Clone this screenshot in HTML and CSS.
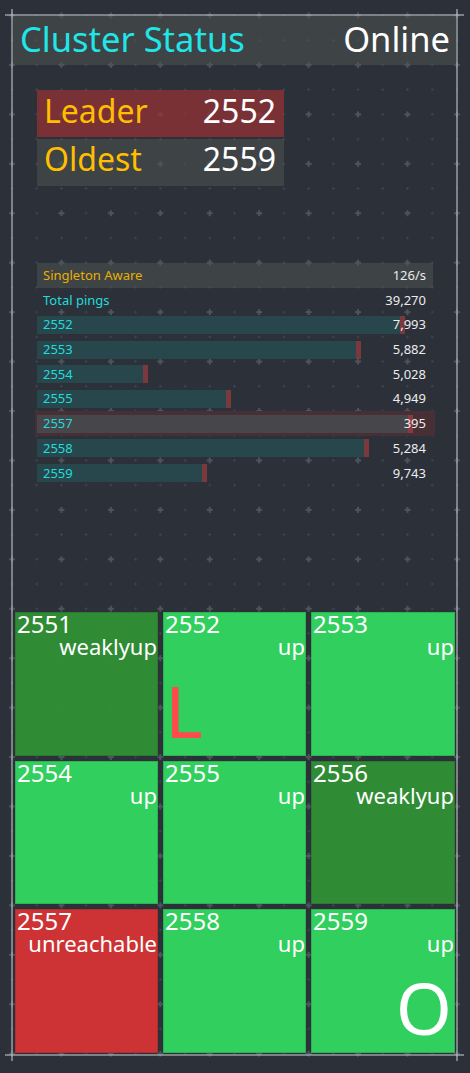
FILE: index.html
```html
<!DOCTYPE html>
<html>
<head>
<meta charset="utf-8">
<link rel="stylesheet" href="styles.css">
</head>
<body>
<div class="frame">
  <div class="header">
    <span class="title">Cluster Status</span>
    <span class="status">Online</span>
  </div>

  <div class="roles">
    <div class="role leader"><span class="role-name">Leader</span><span class="role-val">2552</span></div>
    <div class="role oldest"><span class="role-name">Oldest</span><span class="role-val">2559</span></div>
  </div>

  <div class="stats">
    <div class="row head"><span class="label gold">Singleton Aware</span><span class="val">126/s</span></div>
    <div class="row"><span class="label">Total pings</span><span class="val">39,270</span></div>
    <div class="row"><div class="bar" style="width:368px"></div><span class="label">2552</span><span class="val">7,993</span></div>
    <div class="row"><div class="bar" style="width:324px"></div><span class="label">2553</span><span class="val">5,882</span></div>
    <div class="row"><div class="bar" style="width:111px"></div><span class="label">2554</span><span class="val">5,028</span></div>
    <div class="row"><div class="bar" style="width:194px"></div><span class="label">2555</span><span class="val">4,949</span></div>
    <div class="row sel"><div class="bar gray" style="width:376px"></div><span class="label">2557</span><span class="val">395</span></div>
    <div class="row"><div class="bar" style="width:332px"></div><span class="label">2558</span><span class="val">5,284</span></div>
    <div class="row"><div class="bar" style="width:170px"></div><span class="label">2559</span><span class="val">9,743</span></div>
  </div>

  <div class="nodes">
    <div class="node weak"><span class="num">2551</span><span class="state">weaklyup</span></div>
    <div class="node up"><span class="num">2552</span><span class="state">up</span><span class="mark left">L</span></div>
    <div class="node up"><span class="num">2553</span><span class="state">up</span></div>
    <div class="node up"><span class="num">2554</span><span class="state">up</span></div>
    <div class="node up"><span class="num">2555</span><span class="state">up</span></div>
    <div class="node weak"><span class="num">2556</span><span class="state">weaklyup</span></div>
    <div class="node down"><span class="num">2557</span><span class="state">unreachable</span></div>
    <div class="node up"><span class="num">2558</span><span class="state">up</span></div>
    <div class="node up"><span class="num">2559</span><span class="state">up</span><span class="mark right">O</span></div>
  </div>
</div>
</body>
</html>
```

FILE: styles.css
```css
html, body {
  margin: 0;
  padding: 0;
}

body {
  width: 470px;
  height: 1073px;
  overflow: hidden;
  font-family: "Noto Sans", "Open Sans", "DejaVu Sans", sans-serif;
  color: #ffffff;
  background-color: #2b3039;
  background-image:
    radial-gradient(3.5px 0.8px at 50% 50%, #4e545c 95%, transparent 100%),
    radial-gradient(0.8px 3.5px at 50% 50%, #4e545c 95%, transparent 100%),
    radial-gradient(circle at 50% 50%, #3d444d 0 1px, transparent 1.3px);
  background-size: 49.44px 49.44px, 49.44px 49.44px, 24.72px 24.72px;
  background-position: -12.72px -9.22px, -12.72px -9.22px, -0.36px 3.14px;
  padding: 14px 0 0 11px;
  box-sizing: border-box;
}

.frame {
  position: relative;
  width: 447px;
  height: 1042px;
  padding: 2px;
  box-sizing: border-box;
}

.frame::before {
  content: "";
  position: absolute;
  top: 0;
  bottom: 0;
  left: -6px;
  right: -6px;
  border-top: 2px solid rgba(180, 184, 190, 0.6);
  border-bottom: 2px solid rgba(180, 184, 190, 0.6);
  pointer-events: none;
}

.frame::after {
  content: "";
  position: absolute;
  top: -5px;
  bottom: -5px;
  left: 0;
  right: 0;
  border-left: 2px solid rgba(180, 184, 190, 0.6);
  border-right: 2px solid rgba(180, 184, 190, 0.6);
  pointer-events: none;
}

.header {
  height: 49px;
  display: flex;
  justify-content: space-between;
  align-items: flex-start;
  padding: 0 6px 0 7px;
  background: rgba(78, 84, 82, 0.55);
  font-size: 34.5px;
  line-height: 45px;
}

.title {
  color: #20e6e8;
}

.status {
  color: #ffffff;
}

.roles {
  margin: 25px 0 0 24px;
  width: 247px;
  display: flex;
  flex-direction: column;
  gap: 2px;
}

.role {
  height: 47px;
  display: flex;
  justify-content: space-between;
  align-items: flex-start;
  padding: 0 8px 0 7px;
  font-size: 32px;
  line-height: 42px;
}

.leader {
  background: rgba(150, 50, 52, 0.75);
}

.oldest {
  background: rgba(78, 84, 82, 0.55);
  line-height: 40px;
}

.role-name {
  color: #ffbf00;
}

.role-val {
  color: #ffffff;
}

.stats {
  margin: 77px 0 0 24px;
  width: 396px;
  display: flex;
  flex-direction: column;
  font-size: 13px;
}

.row {
  height: 24.72px;
  display: grid;
  grid-template-columns: 1fr auto;
  align-items: center;
  line-height: 23px;
}

.row .label {
  grid-area: 1 / 1 / 2 / 2;
  padding-left: 6px;
  color: #22dcdc;
}

.row .val {
  grid-area: 1 / 2 / 2 / 3;
  padding-right: 7px;
  color: #ececec;
}

.row .label.gold {
  color: #e8b000;
}

.row.head {
  background: rgba(78, 84, 82, 0.55);
}

.bar {
  grid-area: 1 / 1 / 2 / 3;
  height: 18px;
  box-sizing: border-box;
  background: #28474d;
  border-right: 5px solid #7a3a3d;
}

.bar.gray {
  background: #46464b;
  border-right-color: #8a3a3e;
}

.row.sel {
  background: #472f36;
  box-shadow: -2px 0 0 0 #472f36, 2px 0 0 0 #472f36;
}

.nodes {
  margin: 127px 0 0 2px;
  width: 440px;
  display: grid;
  grid-template-columns: 143px 143px 144px;
  grid-template-rows: repeat(3, 143.5px);
  gap: 5px;
}

.node {
  display: flex;
  flex-direction: column;
  padding: 0 0 0 1px;
  border: 1px solid rgba(0, 0, 0, 0.12);
  box-sizing: border-box;
}

.node.up {
  background: rgba(50, 213, 94, 0.97);
}

.node.weak {
  background: rgba(48, 143, 52, 0.97);
}

.node.down {
  background: rgba(211, 52, 52, 0.97);
}

.num {
  font-size: 24px;
  line-height: 21px;
  color: #ffffff;
}

.state {
  align-self: flex-end;
  font-size: 22px;
  line-height: 25px;
  color: #ffffff;
}

.mark {
  margin-top: auto;
  font-size: 72px;
  line-height: 72px;
  padding-bottom: 9px;
}

.mark.left {
  align-self: flex-start;
  color: #ff4b4b;
}

.mark.right {
  align-self: flex-end;
  color: #ffffff;
  padding-right: 2px;
}
```
